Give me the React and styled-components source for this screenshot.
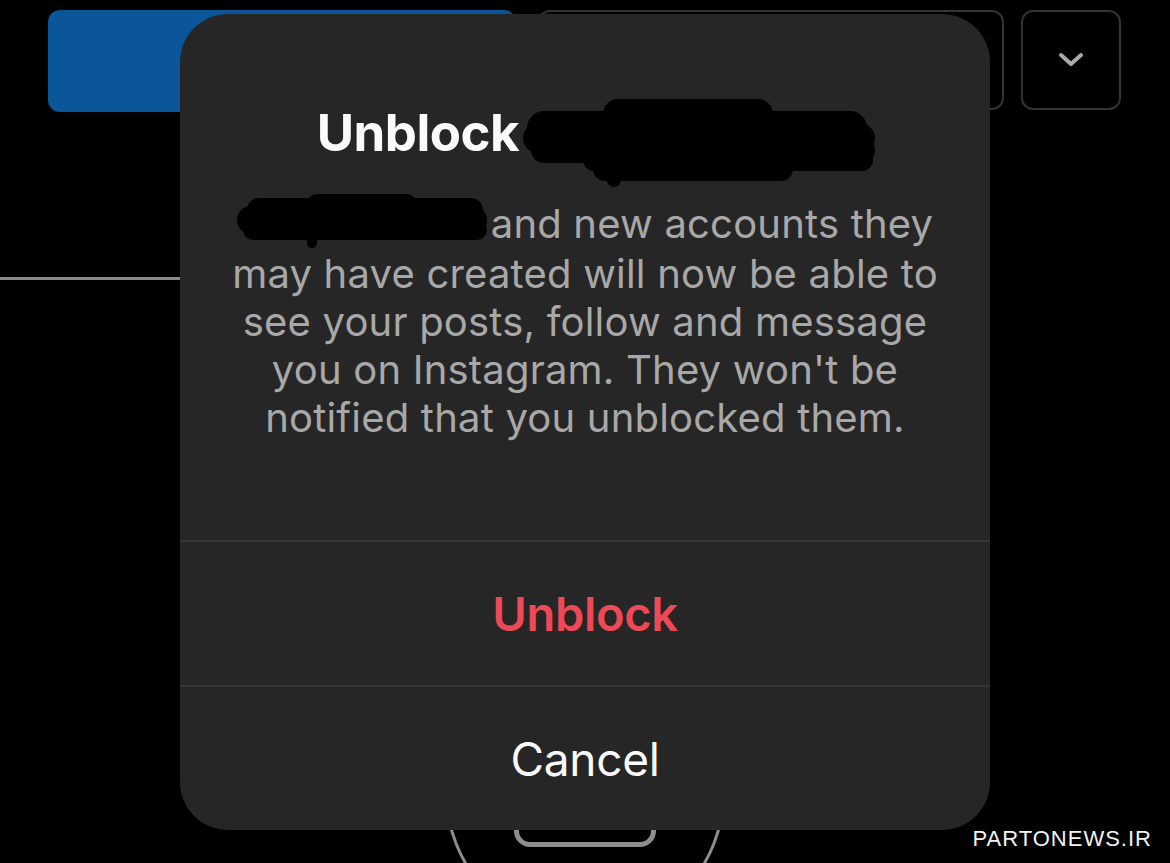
import React from "react";
import styled, { createGlobalStyle } from "styled-components";

const Global = createGlobalStyle`
  html, body { margin: 0; padding: 0; background: #000; }
  body { font-family: Inter, "Noto Sans", sans-serif; overflow: hidden; }
  #root { width: 1170px; height: 863px; }
`;

const Page = styled.div`
  position: relative;
  width: 1170px;
  height: 863px;
  background: #000;
  overflow: hidden;
`;

const ActionRow = styled.div`
  display: flex;
  gap: 20px;
  padding: 10px 0 0 48px;
  align-items: flex-start;
`;

const PrimaryButton = styled.div`
  width: 468px;
  height: 102px;
  border-radius: 12px;
  background: #0b5698;
`;

const OutlineButton = styled.div`
  box-sizing: border-box;
  width: ${(p) => p.$w}px;
  height: 100px;
  border: 2px solid #333;
  border-radius: 12px;
  display: flex;
  align-items: center;
  justify-content: center;
  margin-left: ${(p) => p.$ml || 0}px;
`;

const Divider = styled.div`
  margin-top: 165px;
  width: 220px;
  height: 3px;
  background: #8a8a8a;
`;

const AvatarRing = styled.div`
  margin: 373px auto 0;
  box-sizing: border-box;
  width: 280px;
  height: 280px;
  border-radius: 50%;
  border: 3px solid #8d8d8d;
  display: flex;
  justify-content: center;
  align-items: flex-start;
  padding-top: 111px;
`;

const AvatarInner = styled.div`
  box-sizing: border-box;
  width: 142px;
  height: 80px;
  border: 5px solid #8d8d8d;
  border-radius: 16px;
`;

const Watermark = styled.div`
  position: absolute;
  right: 18px;
  bottom: 13px;
  font-family: "Liberation Sans", Arial, sans-serif;
  font-size: 22px;
  line-height: 22px;
  color: #f2f2f2;
  letter-spacing: 1px;
`;

const Dialog = styled.div`
  position: absolute;
  left: 180px;
  top: 14px;
  width: 810px;
  height: 816px;
  background: #262626;
  border-radius: 48px;
  display: flex;
  flex-direction: column;
  overflow: hidden;
`;

const Header = styled.div`
  flex: 1;
  display: flex;
  flex-direction: column;
  align-items: center;
  padding-top: 91px;
`;

const Title = styled.div`
  display: flex;
  align-items: flex-start;
  gap: 4px;
  font-size: 51px;
  font-weight: 700;
  color: #fafafa;
  letter-spacing: -0.5px;
  line-height: 56px;
  margin-left: 26px;
  height: 56px;
`;

const Body = styled.p`
  margin: 39px 0 0;
  text-align: center;
  font-size: 40px;
  line-height: 48px;
  color: #a8a8a8;
  letter-spacing: 0.2px;
`;

const Redact = styled.svg`
  display: inline-block;
  vertical-align: middle;
  flex-shrink: 0;
`;

const ActionButton = styled.div`
  height: 143px;
  border-top: 2px solid #353535;
  display: flex;
  align-items: center;
  justify-content: center;
  font-size: ${(p) => (p.$danger ? 47 : 46)}px;
  font-weight: ${(p) => (p.$danger ? 600 : 400)};
  color: ${(p) => (p.$danger ? "#ed4956" : "#fafafa")};
  letter-spacing: -0.3px;
`;

function TitleBlot() {
  return (
    <Redact width="356" height="92" viewBox="0 0 356 92" style={{ marginTop: -8 }}>
      <g fill="#000">
        <rect x="4" y="14" width="340" height="34" rx="17" />
        <rect x="0" y="26" width="352" height="30" rx="15" />
        <rect x="8" y="40" width="344" height="26" rx="13" />
        <rect x="60" y="52" width="290" height="22" rx="11" />
        <rect x="70" y="60" width="200" height="24" rx="12" />
        <rect x="80" y="2" width="170" height="30" rx="15" />
        <rect x="84" y="64" width="14" height="26" rx="7" />
      </g>
    </Redact>
  );
}

function BodyBlot() {
  return (
    <Redact width="254" height="56" viewBox="0 0 254 56" style={{ marginRight: 0, marginTop: -10 }}>
      <g fill="#000">
        <rect x="10" y="4" width="236" height="24" rx="12" />
        <rect x="0" y="12" width="250" height="28" rx="14" />
        <rect x="6" y="26" width="244" height="20" rx="10" />
        <rect x="70" y="0" width="110" height="20" rx="10" />
        <rect x="70" y="36" width="10" height="18" rx="5" />
      </g>
    </Redact>
  );
}

function ChevronDown() {
  return (
    <svg width="26" height="16" viewBox="0 0 26 16">
      <path d="M3 3 L13 12 L23 3" fill="none" stroke="#a9a9a9" strokeWidth="4" strokeLinecap="round" strokeLinejoin="round" />
    </svg>
  );
}

export default function App() {
  return (
    <>
      <Global />
      <Page>
        <ActionRow>
          <PrimaryButton />
          <OutlineButton $w={466} $ml={2} />
          <OutlineButton $w={100} $ml={-3}>
            <ChevronDown />
          </OutlineButton>
        </ActionRow>
        <Divider />
        <AvatarRing>
          <AvatarInner />
        </AvatarRing>
        <Watermark>PARTONEWS.IR</Watermark>
        <Dialog>
          <Header>
            <Title>
              <span>Unblock</span>
              <TitleBlot />
            </Title>
            <Body>
              <BodyBlot />
              and new accounts they
              <br />
              may have created will now be able to
              <br />
              see your posts, follow and message
              <br />
              you on Instagram. They won't be
              <br />
              notified that you unblocked them.
            </Body>
          </Header>
          <ActionButton $danger>Unblock</ActionButton>
          <ActionButton>Cancel</ActionButton>
        </Dialog>
      </Page>
    </>
  );
}
